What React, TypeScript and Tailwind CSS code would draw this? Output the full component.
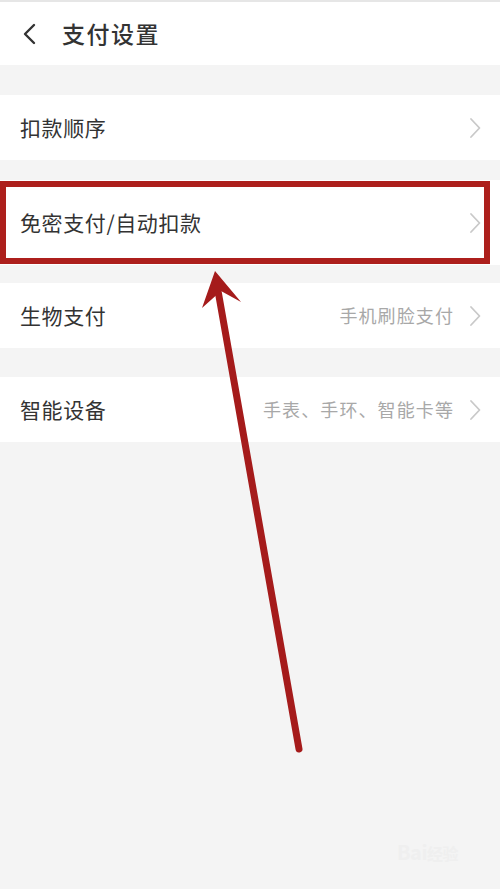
import React from "react";

const Chevron = () => (
  <svg width="14" height="22" viewBox="0 0 14 22" className="shrink-0">
    <path d="M3 2 L11.5 11 L3 20" fill="none" stroke="#c9c9c9" strokeWidth="1.8" strokeLinecap="round" strokeLinejoin="round" />
  </svg>
);

function Row({ label, value, h = "h-[65px]" }: { label: string; value?: string; h?: string }) {
  return (
    <div className={`${h} bg-white flex items-center pl-[20px] pr-[18px]`}>
      <span className="text-[21px] text-[#333] tracking-[0.6px] flex-1">{label}</span>
      {value && <span className="text-[18px] text-[#a8a8a8] mr-[14px] tracking-[1.1px]">{value}</span>}
      <Chevron />
    </div>
  );
}

export default function App() {
  return (
    <div
      className="relative w-[500px] h-[889px] overflow-hidden bg-[#f4f4f4]"
      style={{ fontFamily: '"Noto Sans CJK SC", "Noto Sans", sans-serif' }}
    >
      <div className="h-[2px] bg-[#e6e6e6]" />
      <div className="h-[63px] bg-white flex items-center pl-[20px]">
        <svg width="20" height="24" viewBox="0 0 20 24" className="mr-[22px]">
          <path d="M14 3 L5 12 L14 21" fill="none" stroke="#333" strokeWidth="2.4" strokeLinecap="round" strokeLinejoin="round" />
        </svg>
        <span className="text-[23px] text-[#333] font-medium tracking-[1.5px]">支付设置</span>
      </div>

      <div className="h-[30px]" />
      <Row label="扣款顺序" />
      <div className="h-[20px]" />
      <div className="relative">
        <Row label="免密支付/自动扣款" h="h-[85px]" />
        <div className="absolute left-0 top-[1px] w-[490px] h-[83px] border-[6px] border-[#ad1f1c]" />
      </div>
      <div className="h-[18px]" />
      <Row label="生物支付" value="手机刷脸支付" />
      <div className="h-[29px]" />
      <Row label="智能设备" value="手表、手环、智能卡等" />

      <div className="absolute right-[42px] bottom-[22px] text-[20px] font-bold text-[#efefef] tracking-tight">
        Bai<span className="text-[16px]">经验</span>
      </div>

      <svg className="absolute left-0 top-0" width="500" height="889" viewBox="0 0 500 889">
        <line x1="299" y1="749" x2="217" y2="285" stroke="#a51b1b" strokeWidth="7" strokeLinecap="round" />
        <polygon points="215,271 241,302 221,291 202,308" fill="#a51b1b" />
      </svg>
    </div>
  );
}
